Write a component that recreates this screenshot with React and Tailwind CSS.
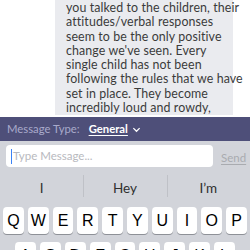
import React from 'react';

const MESSAGE_LINES = [
    'you talked to the children, their',
    'attitudes/verbal responses',
    'seem to be the only positive',
    "change we've seen. Every",
    'single child has not been',
    'following the rules that we have',
    'set in place. They become',
    'incredibly loud and rowdy,',
];

const ROW_ONE = ['Q', 'W', 'E', 'R', 'T', 'Y', 'U', 'I', 'O', 'P'];
const ROW_TWO = ['A', 'S', 'D', 'F', 'G', 'H', 'J', 'K', 'L'];
const SUGGESTIONS = ['I', 'Hey', "I’m"];

function Key({ label }) {
    return (
        <div className="h-[27px] bg-white rounded-[4px] shadow-[0_1px_0_#8e9197] flex items-center justify-center text-[16px] text-black font-['Liberation_Sans',sans-serif]">
            {label}
        </div>
    );
}

export default function App() {
    return (
        <div className="w-[250px] h-[250px] overflow-hidden bg-white font-['Lato',sans-serif]">
            {/* conversation */}
            <div className="h-[117px] overflow-hidden">
                <div className="ml-[55px] w-[178px] h-[115px] bg-[#eaebef] pl-[11px] pt-[1px] text-[12.4px] leading-[14.25px] text-[#3b3b3b] whitespace-nowrap tracking-[0.1px]">
                    {MESSAGE_LINES.map(line => (
                        <div key={line}>{line}</div>
                    ))}
                </div>
            </div>

            {/* message type bar */}
            <div className="h-[24px] bg-[#4e4f79] flex items-center pl-[7px] text-[11.3px]">
                <span className="text-[#a9aacb]">Message Type:</span>
                <span className="ml-[9px] text-white font-bold underline underline-offset-2">General</span>
                <svg className="ml-[4px] w-[9px] h-[9px]" viewBox="0 0 10 10" fill="none" stroke="white" strokeWidth={1.4}>
                    <path d="M1.5 3.5 L5 7 L8.5 3.5" />
                </svg>
            </div>

            {/* input row */}
            <div className="h-[29px] bg-[#d2d4da] flex items-start pt-[4px] pl-[6px]">
                <div className="w-[207px] h-[22px] bg-white rounded-[4px] flex items-center pl-[5px] text-[11.5px] text-[#b8b9be]">
                    <span className="w-[1px] h-[15px] bg-[#3b82f6] mr-[1px]" />
                    Type Message...
                </div>
                <span className="ml-[8px] mt-[4px] text-[11.5px] text-[#a9abb0] underline underline-offset-2">Send</span>
            </div>

            {/* keyboard */}
            <div className="bg-[#d2d4da] h-[80px]">
                <div className="h-[37px] grid grid-cols-3 items-center text-[13.5px] text-[#2f2f2f]">
                    {SUGGESTIONS.map((s, i) => (
                        <div key={s} className="relative flex justify-center">
                            {s}
                            {i > 0 && <span className="absolute left-0 -top-[3px] w-px h-[22px] bg-[#bfc1c7]" />}
                        </div>
                    ))}
                </div>
                <div className="grid grid-cols-10 gap-[4px] px-[3px]">
                    {ROW_ONE.map(k => <Key key={k} label={k} />)}
                </div>
                <div className="grid grid-cols-9 gap-[4px] px-[15px] mt-[8px]">
                    {ROW_TWO.map(k => <Key key={k} label={k} />)}
                </div>
            </div>
        </div>
    );
}
